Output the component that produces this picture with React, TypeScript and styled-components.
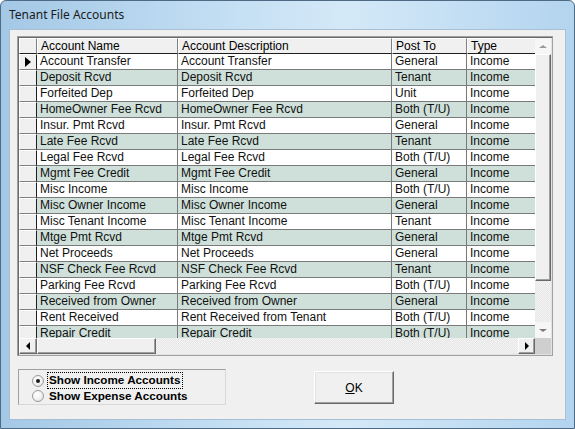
import { FC } from "react";
import styled, { createGlobalStyle } from "styled-components";

const GlobalStyle = createGlobalStyle`
  html, body {
    margin: 0;
    padding: 0;
    background: #fff;
  }
  * {
    box-sizing: border-box;
  }
`;

const Window = styled.div`
  width: 575px;
  height: 429px;
  display: flex;
  flex-direction: column;
  padding: 0 8px 8px;
  background: linear-gradient(to right, #a3c8e6 0%, #c0dcf2 35%, #d4e9f8 60%, #b3d4ef 100%);
  border: 1px solid #4f6a84;
  border-radius: 6px 6px 0 0;
  overflow: hidden;
`;

const TitleBar = styled.div`
  height: 28px;
  display: flex;
  align-items: center;
  padding: 0 0 2px 0;
  font-family: "Noto Sans", "Open Sans", sans-serif;
  font-size: 12px;
  color: #1b1b1b;
`;

const Client = styled.div`
  flex: 1;
  background: #f0f0f0;
  border: 1px solid #a9bfd3;
  padding: 6px 14px 0 7px;
  display: flex;
  flex-direction: column;
  font-family: "Liberation Sans", Arial, sans-serif;
`;

const GridFrame = styled.div`
  width: 536px;
  height: 320px;
  border: 1px solid #a0a0a0;
  box-shadow: inset 1px 1px 0 #696969, inset -1px -1px 0 #e3e3e3;
  padding: 1px;
  background: #fff;
  display: grid;
  grid-template-columns: 516px 16px;
  grid-template-rows: 300px 16px;
`;

const TableArea = styled.div`
  overflow: hidden;
  background: #fff;
`;

const Row = styled.div<{ $alt?: boolean }>`
  display: grid;
  grid-template-columns: 18px 141px 214px 75px 80px;
  height: 16px;
  background: ${(p) => (p.$alt ? "#cfe0da" : "#fff")};
`;

const HeadCell = styled.div`
  height: 16px;
  padding: 0 0 0 3px;
  font-size: 12px;
  line-height: 15px;
  color: #000;
  background: #f0f0f0;
  border-top: 1px solid #fff;
  border-left: 1px solid #fff;
  border-right: 1px solid #808080;
  border-bottom: 1px solid #1e1e1e;
  white-space: nowrap;
  overflow: hidden;
`;

const Indicator = styled.div`
  height: 16px;
  background: #f0f0f0;
  border-top: 1px solid #fff;
  border-left: 1px solid #fff;
  border-right: 1px solid #1e1e1e;
  border-bottom: 1px solid #808080;
  display: flex;
  align-items: center;
  padding-left: 5px;
`;

const Pointer = styled.span`
  width: 0;
  height: 0;
  border-top: 5px solid transparent;
  border-bottom: 5px solid transparent;
  border-left: 6px solid #000;
`;

const Cell = styled.div`
  height: 16px;
  padding: 0 0 0 3px;
  font-size: 12px;
  line-height: 15px;
  color: #111;
  border-right: 1px solid #7a7a7a;
  border-bottom: 1px solid #7a7a7a;
  white-space: nowrap;
  overflow: hidden;
`;

const VScroll = styled.div`
  display: flex;
  flex-direction: column;
  background: repeating-conic-gradient(#f4f4f4 0 25%, #e6e6e6 0 50%) 0 0 / 2px 2px;
`;

const FlatArrow = styled.div`
  height: 16px;
  display: flex;
  align-items: center;
  justify-content: center;
  background: #f6f6f6;
`;

const Tri = styled.span<{ $dir: "up" | "down" | "left" | "right"; $color?: string }>`
  width: 0;
  height: 0;
  ${(p) => {
    const c = p.$color ?? "#000";
    switch (p.$dir) {
      case "up":
        return `border-left: 4px solid transparent; border-right: 4px solid transparent; border-bottom: 3px solid ${c};`;
      case "down":
        return `border-left: 4px solid transparent; border-right: 4px solid transparent; border-top: 3px solid ${c};`;
      case "left":
        return `border-top: 4px solid transparent; border-bottom: 4px solid transparent; border-right: 4px solid ${c};`;
      default:
        return `border-top: 4px solid transparent; border-bottom: 4px solid transparent; border-left: 4px solid ${c};`;
    }
  }}
`;

const VThumb = styled.div`
  height: 227px;
  background: #f0f0f0;
  border-top: 1px solid #fff;
  border-left: 1px solid #fff;
  border-right: 1px solid #696969;
  border-bottom: 1px solid #696969;
  box-shadow: inset -1px -1px 0 #a0a0a0;
`;

const Spacer = styled.div`
  flex: 1;
`;

const HScroll = styled.div`
  display: flex;
  background: repeating-conic-gradient(#f4f4f4 0 25%, #e6e6e6 0 50%) 0 0 / 2px 2px;
`;

const Button3D = styled.div<{ $w: number }>`
  width: ${(p) => p.$w}px;
  height: 16px;
  display: flex;
  align-items: center;
  justify-content: center;
  background: #f0f0f0;
  border-top: 1px solid #fff;
  border-left: 1px solid #fff;
  border-right: 1px solid #696969;
  border-bottom: 1px solid #696969;
  box-shadow: inset -1px -1px 0 #a0a0a0;
`;

const Corner = styled.div`
  background: #cfcfcf;
`;

const Bottom = styled.div`
  display: flex;
  align-items: flex-start;
  margin-top: 13px;
  padding-left: 1px;
`;

const GroupBox = styled.div`
  width: 208px;
  height: 36px;
  border: 1px solid #a0a0a0;
  border-right-color: #d8d8d8;
  border-bottom-color: #d8d8d8;
  padding: 3px 0 0 13px;
  display: flex;
  flex-direction: column;
`;

const RadioRow = styled.label`
  display: flex;
  align-items: center;
  height: 16px;
`;

const RadioCircle = styled.span<{ $on?: boolean }>`
  width: 12px;
  height: 12px;
  border-radius: 50%;
  border: 1px solid #9b9b9b;
  background: radial-gradient(circle at 40% 35%, #fff 0%, #f0f0f0 55%, #d6d6d6 100%);
  display: flex;
  align-items: center;
  justify-content: center;
  margin-right: 4px;
  &::after {
    content: "";
    width: 4px;
    height: 4px;
    border-radius: 50%;
    background: ${(p) => (p.$on ? "#1a1a1a" : "transparent")};
  }
`;

const RadioText = styled.span<{ $focus?: boolean }>`
  font-size: 11.7px;
  font-weight: bold;
  color: #000;
  padding: 0 2px 1px 1px;
  line-height: 14px;
  outline: ${(p) => (p.$focus ? "1px dotted #000" : "none")};
  white-space: nowrap;
`;

const OkButton = styled.div`
  margin-left: 88px;
  margin-top: 2px;
  width: 80px;
  height: 33px;
  background: #f0f0f0;
  border-top: 1px solid #fff;
  border-left: 1px solid #fff;
  border-right: 1px solid #696969;
  border-bottom: 1px solid #696969;
  box-shadow: inset -1px -1px 0 #a0a0a0, inset 1px 1px 0 #e3e3e3;
  display: flex;
  align-items: center;
  justify-content: center;
  font-size: 12px;
  color: #000;
  u {
    text-decoration: underline;
  }
`;

const rows: [string, string, string, string][] = [
  ["Account Transfer", "Account Transfer", "General", "Income"],
  ["Deposit Rcvd", "Deposit Rcvd", "Tenant", "Income"],
  ["Forfeited Dep", "Forfeited Dep", "Unit", "Income"],
  ["HomeOwner Fee Rcvd", "HomeOwner Fee Rcvd", "Both (T/U)", "Income"],
  ["Insur. Pmt Rcvd", "Insur. Pmt Rcvd", "General", "Income"],
  ["Late Fee Rcvd", "Late Fee Rcvd", "Tenant", "Income"],
  ["Legal Fee Rcvd", "Legal Fee Rcvd", "Both (T/U)", "Income"],
  ["Mgmt Fee Credit", "Mgmt Fee Credit", "General", "Income"],
  ["Misc Income", "Misc Income", "Both (T/U)", "Income"],
  ["Misc Owner Income", "Misc Owner Income", "General", "Income"],
  ["Misc Tenant Income", "Misc Tenant Income", "Tenant", "Income"],
  ["Mtge Pmt Rcvd", "Mtge Pmt Rcvd", "General", "Income"],
  ["Net Proceeds", "Net Proceeds", "General", "Income"],
  ["NSF Check Fee Rcvd", "NSF Check Fee Rcvd", "Tenant", "Income"],
  ["Parking Fee Rcvd", "Parking Fee Rcvd", "Both (T/U)", "Income"],
  ["Received from Owner", "Received from Owner", "General", "Income"],
  ["Rent Received", "Rent Received from Tenant", "Both (T/U)", "Income"],
  ["Repair Credit", "Repair Credit", "Both (T/U)", "Income"],
];

const App: FC = () => {
  return (
    <>
      <GlobalStyle />
      <Window>
        <TitleBar>Tenant File Accounts</TitleBar>
        <Client>
          <GridFrame>
            <TableArea>
              <Row>
                <HeadCell />
                <HeadCell>Account Name</HeadCell>
                <HeadCell>Account Description</HeadCell>
                <HeadCell>Post To</HeadCell>
                <HeadCell>Type</HeadCell>
              </Row>
              {rows.map((r, i) => (
                <Row key={r[0]} $alt={i % 2 === 1}>
                  <Indicator>{i === 0 && <Pointer />}</Indicator>
                  {r.map((c, j) => (
                    <Cell key={j}>{c}</Cell>
                  ))}
                </Row>
              ))}
            </TableArea>
            <VScroll>
              <FlatArrow>
                <Tri $dir="up" $color="#9a9a9a" />
              </FlatArrow>
              <VThumb />
              <Spacer />
              <FlatArrow>
                <Tri $dir="down" $color="#7a7a7a" />
              </FlatArrow>
            </VScroll>
            <HScroll>
              <Button3D $w={18}>
                <Tri $dir="left" />
              </Button3D>
              <Button3D $w={119} />
              <Spacer />
              <Button3D $w={17}>
                <Tri $dir="right" />
              </Button3D>
            </HScroll>
            <Corner />
          </GridFrame>
          <Bottom>
            <GroupBox>
              <RadioRow>
                <RadioCircle $on />
                <RadioText $focus>Show Income Accounts</RadioText>
              </RadioRow>
              <RadioRow>
                <RadioCircle />
                <RadioText>Show Expense Accounts</RadioText>
              </RadioRow>
            </GroupBox>
            <OkButton>
              <span>
                <u>O</u>K
              </span>
            </OkButton>
          </Bottom>
        </Client>
      </Window>
    </>
  );
};

export default App;
